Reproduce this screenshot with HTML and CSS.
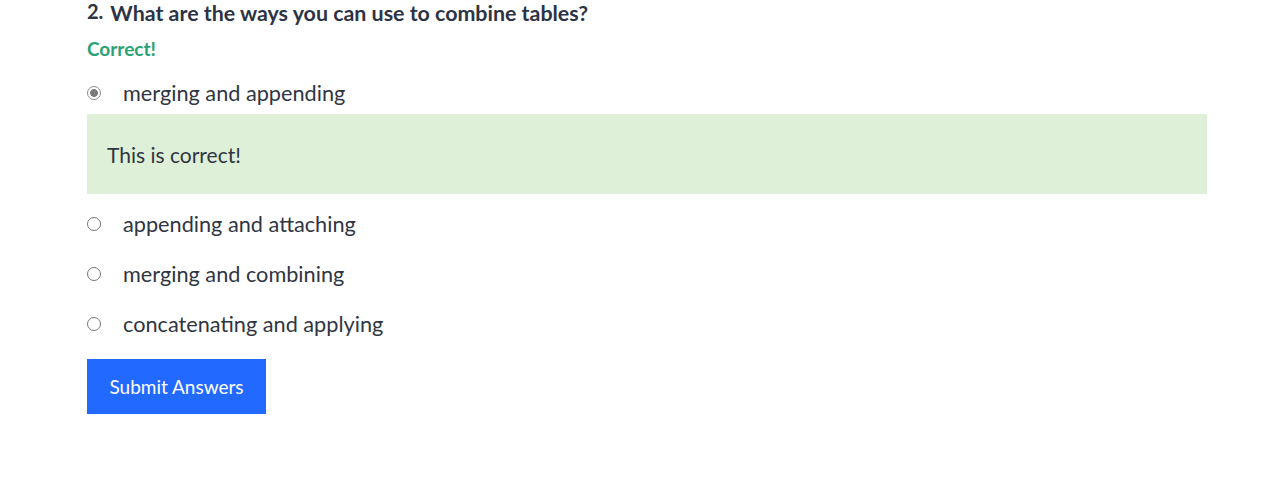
FILE: index.html
```html
<!DOCTYPE html>
<html>
<head>
<meta charset="utf-8">
<link rel="stylesheet" href="styles.css">
</head>
<body>
<div class="quiz">
  <div class="question">
    <span class="num">2.</span>
    <span class="qtext">What are the ways you can use to combine tables?</span>
  </div>
  <div class="status">Correct!</div>
  <label class="option first">
    <input type="radio" name="q2" class="picked" checked>
    <span>merging and appending</span>
  </label>
  <div class="feedback">This is correct!</div>
  <label class="option">
    <input type="radio" name="q2">
    <span>appending and attaching</span>
  </label>
  <label class="option">
    <input type="radio" name="q2">
    <span>merging and combining</span>
  </label>
  <label class="option">
    <input type="radio" name="q2">
    <span>concatenating and applying</span>
  </label>
  <button class="submit">Submit Answers</button>
</div>
</body>
</html>
```
FILE: styles.css
```css
html, body {
  margin: 0;
  padding: 0;
  background: #fff;
}
body {
  font-family: "Lato", "Liberation Sans", sans-serif;
  color: #2f3542;
}
.quiz {
  width: 1120px;
  margin-left: 87px;
  display: flex;
  flex-direction: column;
}
.question {
  display: flex;
  align-items: baseline;
  gap: 7px;
  height: 30px;
  font-weight: 700;
  color: #2c3345;
}
.num {
  font-size: 20px;
  position: relative;
  top: -2px;
}
.qtext {
  font-size: 21.4px;
}
.status {
  color: #2aa274;
  font-weight: 700;
  font-size: 19px;
  height: 38px;
  line-height: 38px;
}
.option {
  display: flex;
  align-items: center;
  height: 50px;
  font-size: 21.7px;
}
.option.first {
  height: 46px;
  padding-top: 4px;
  box-sizing: border-box;
}
.option input {
  margin: 0 22px 0 0;
  width: 14px;
  height: 14px;
}
.option input.picked {
  appearance: none;
  -webkit-appearance: none;
  box-sizing: border-box;
  border: 1px solid #8d8d8d;
  border-radius: 50%;
  background: radial-gradient(circle, #7a7a7a 0 3.6px, #fff 4.2px);
}
.feedback {
  background: #dff0d8;
  height: 80px;
  display: flex;
  align-items: center;
  padding-left: 20px;
  font-size: 21px;
  margin-bottom: 5px;
}
.submit {
  align-self: flex-start;
  margin-top: 10px;
  background: #2269ff;
  color: #fff;
  border: none;
  font-family: inherit;
  font-size: 19px;
  width: 179px;
  height: 55px;
}
```
